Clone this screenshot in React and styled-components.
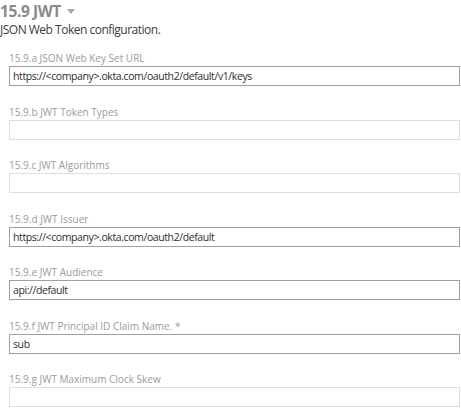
import React from "react";
import styled, { createGlobalStyle } from "styled-components";

const GlobalStyle = createGlobalStyle`
  body {
    margin: 0;
    background: #fff;
  }
`;

const fields = [
  { id: "a", label: "JSON Web Key Set URL", value: "https://<company>.okta.com/oauth2/default/v1/keys" },
  { id: "b", label: "JWT Token Types", value: "" },
  { id: "c", label: "JWT Algorithms", value: "" },
  { id: "d", label: "JWT Issuer", value: "https://<company>.okta.com/oauth2/default" },
  { id: "e", label: "JWT Audience", value: "api://default" },
  { id: "f", label: "JWT Principal ID Claim Name. *", value: "sub" },
  { id: "g", label: "JWT Maximum Clock Skew", value: "" },
];

const App = () => {
  return (
    <Section>
      <GlobalStyle />
      <Title>
        15.9 JWT <Caret />
      </Title>
      <Description>JSON Web Token configuration.</Description>
      <FieldList>
        {fields.map((f) => (
          <Field key={f.id}>
            <Label>
              15.9.{f.id} {f.label}
            </Label>
            <Input filled={f.value !== ""} defaultValue={f.value} readOnly />
          </Field>
        ))}
      </FieldList>
    </Section>
  );
};

export default App;

const Section = styled.div`
  width: 461px;
  box-sizing: border-box;
  font-family: "Open Sans", sans-serif;
`;

const Title = styled.div`
  font-family: "Open Sans", sans-serif;
  font-size: 15.5px;
  font-weight: 700;
  letter-spacing: -0.4px;
  line-height: 22px;
  color: #8a8a8a;
  display: flex;
  align-items: center;
  gap: 6px;
`;

// small down-pointing triangle next to the heading
const Caret = styled.span`
  width: 0;
  height: 0;
  border-left: 4px solid transparent;
  border-right: 4px solid transparent;
  border-top: 5px solid #a8a8a8;
  margin-top: 1px;
`;

const Description = styled.div`
  font-family: "Open Sans", sans-serif;
  font-size: 12px;
  letter-spacing: -0.5px;
  line-height: 16px;
  color: #3c3c3c;
`;

const FieldList = styled.div`
  display: flex;
  flex-direction: column;
  padding: 14px 1px 0 9px;
  gap: 19.5px;
`;

const Field = styled.div`
  display: flex;
  flex-direction: column;
  gap: 2px;
`;

const Label = styled.div`
  font-family: "Open Sans", sans-serif;
  font-size: 10px;
  line-height: 12px;
  color: #9b9b9b;
`;

const Input = styled.input.withConfig({
  shouldForwardProp: (p) => p !== "filled",
})`
  box-sizing: border-box;
  width: 100%;
  height: 20px;
  margin: 0;
  padding: 0 3px;
  font-family: "Open Sans", sans-serif;
  font-size: 10.5px;
  letter-spacing: -0.4px;
  color: #2e2e2e;
  background: #fff;
  border: 1px solid ${(p) => (p.filled ? "#a0a0a0" : "#dedede")};
  border-radius: 0;
  outline: none;
`;
